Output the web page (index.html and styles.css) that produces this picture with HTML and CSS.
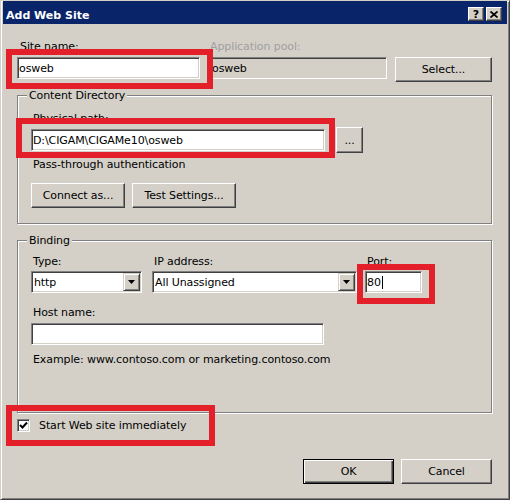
FILE: index.html
```html
<!doctype html>
<html lang="en">
    <head>
        <meta charset="UTF-8" />
        <meta name="viewport" content="width=device-width, initial-scale=1.0" />
        <title>Add Web Site</title>
        <link rel="stylesheet" href="styles.css">
    </head>
    <body>
        <div class="dialog">
            <div class="titlebar">
                <span class="title">Add Web Site</span>
                <span class="caption-btns">
                    <span class="cap-btn help">?</span>
                    <span class="cap-btn close">
                        <svg width="8" height="7" viewBox="0 0 8 7">
                            <path d="M0.5 0.5 L7.5 6.5 M7.5 0.5 L0.5 6.5" stroke="#000" stroke-width="1.7" fill="none" />
                        </svg>
                    </span>
                </span>
            </div>

            <div class="content">
                <div class="top-row">
                    <div class="field site-field">
                        <div class="label">Site name:</div>
                        <div class="textbox">osweb</div>
                    </div>
                    <div class="field pool-field">
                        <div class="label disabled">Application pool:</div>
                        <div class="textbox readonly">osweb</div>
                    </div>
                    <button class="btn select-btn">Select...</button>
                </div>

                <fieldset class="group content-dir">
                    <legend>Content Directory</legend>
                    <div class="label">Physical path:</div>
                    <div class="path-row">
                        <div class="textbox path-box">D:\CIGAM\CIGAMe10\osweb</div>
                        <button class="btn browse-btn">...</button>
                    </div>
                    <div class="label pass-label">Pass-through authentication</div>
                    <div class="btn-row">
                        <button class="btn connect-btn">Connect as...</button>
                        <button class="btn test-btn">Test Settings...</button>
                    </div>
                </fieldset>

                <fieldset class="group binding">
                    <legend>Binding</legend>
                    <div class="binding-row">
                        <div class="field type-field">
                            <div class="label">Type:</div>
                            <div class="combo">
                                <span class="combo-value">http</span>
                                <span class="combo-arrow">
                                    <svg width="7" height="4" viewBox="0 0 7 4"><polygon points="0,0 7,0 3.5,4" fill="#000" /></svg>
                                </span>
                            </div>
                        </div>
                        <div class="field ip-field">
                            <div class="label">IP address:</div>
                            <div class="combo">
                                <span class="combo-value">All Unassigned</span>
                                <span class="combo-arrow">
                                    <svg width="7" height="4" viewBox="0 0 7 4"><polygon points="0,0 7,0 3.5,4" fill="#000" /></svg>
                                </span>
                            </div>
                        </div>
                        <div class="field port-field">
                            <div class="label">Port:</div>
                            <div class="textbox">80<span class="caret"></span></div>
                        </div>
                    </div>
                    <div class="label host-label">Host name:</div>
                    <div class="textbox host-box"></div>
                    <div class="label example">Example: www.contoso.com or marketing.contoso.com</div>
                </fieldset>

                <div class="check-row">
                    <span class="checkbox">
                        <svg width="9" height="9" viewBox="0 0 9 9">
                            <polyline points="1,4 3.5,6.5 8,1.5" stroke="#000" stroke-width="2" fill="none" />
                        </svg>
                    </span>
                    <span class="check-label">Start Web site immediately</span>
                </div>

                <div class="dialog-buttons">
                    <button class="btn btn-default">OK</button>
                    <button class="btn">Cancel</button>
                </div>
            </div>

            <!-- red annotation boxes drawn over the dialog -->
            <div class="mark mark-site"></div>
            <div class="mark mark-path"></div>
            <div class="mark mark-port"></div>
            <div class="mark mark-start"></div>
        </div>
    </body>
</html>
```

FILE: styles.css
```css
:root {
    --face: #d4d0c8;
    --shadow: #808080;
    --dark: #404040;
    --light: #ffffff;
    --title: #0a246a;
    --mark: #e3202a;
}

* {
    margin: 0;
    padding: 0;
    box-sizing: border-box;
}

body {
    background: #ffffff;
    font-family: "DejaVu Sans", sans-serif;
    font-size: 11px;
    letter-spacing: -0.1px;
    color: #000000;
}

.dialog {
    position: relative;
    width: 510px;
    height: 500px;
    background: var(--face);
    border: 1px solid;
    border-color: var(--face) var(--dark) var(--dark) var(--face);
    box-shadow: inset 1px 1px 0 var(--light), inset -1px -1px 0 var(--shadow);
    padding: 0 2px 2px 2px;
}

.titlebar {
    height: 23px;
    background: var(--title);
    display: flex;
    align-items: flex-start;
    justify-content: space-between;
    padding: 0 5px 0 3px;
}

.title {
    color: #ffffff;
    font-weight: bold;
    line-height: 13px;
    padding-top: 8px;
    letter-spacing: 0;
}

.caption-btns {
    display: flex;
    gap: 2px;
    margin-top: 6px;
}

.cap-btn {
    width: 16px;
    height: 14px;
    display: flex;
    align-items: center;
    justify-content: center;
    background: var(--face);
    border: 1px solid;
    border-color: var(--light) var(--dark) var(--dark) var(--light);
    box-shadow: inset -1px -1px 0 var(--shadow);
    font-weight: bold;
    font-size: 11px;
    line-height: 1;
}

.content {
    padding: 16px 15px 0 14px;
}

.label {
    line-height: 13px;
    padding-left: 2px;
    margin-bottom: 4px;
    white-space: nowrap;
}

.top-row .label {
    padding-left: 3px;
}

.label.disabled {
    color: #a0a0a0;
    padding-left: 2px;
}

.textbox,
.combo {
    height: 22px;
    background: #ffffff;
    border: 1px solid;
    border-color: var(--shadow) var(--light) var(--light) var(--shadow);
    box-shadow: inset 1px 1px 0 var(--dark), inset -1px -1px 0 var(--face);
    display: flex;
    align-items: center;
    padding-left: 1px;
    white-space: nowrap;
    overflow: hidden;
}

.textbox.readonly {
    background: var(--face);
    padding-left: 3px;
}

.btn {
    height: 25px;
    background: var(--face);
    border: 1px solid;
    border-color: var(--light) var(--dark) var(--dark) var(--light);
    box-shadow: inset -1px -1px 0 var(--shadow), inset 1px 1px 0 var(--face);
    font: inherit;
    color: #000000;
    letter-spacing: inherit;
    padding: 0;
}

.btn-default {
    border-color: #000000;
    box-shadow: inset 1px 1px 0 var(--light), inset -1px -1px 0 var(--dark), inset -2px -2px 0 var(--shadow);
}

/* top row */
.top-row {
    display: flex;
    gap: 8px;
    align-items: flex-start;
}

.site-field {
    width: 183px;
}

.pool-field {
    width: 179px;
}

.select-btn {
    width: 97px;
    margin-top: 17px;
}

/* group boxes */
.group {
    border: 1px solid var(--shadow);
    box-shadow: inset 1px 1px 0 var(--light), 1px 1px 0 var(--light);
    padding: 10px 13px 15px 13px;
    min-width: 0;
}

.group legend {
    line-height: 13px;
    padding: 0 2px;
    margin-left: -4px;
    background: var(--face);
}

.content-dir {
    margin-top: 7px;
}

.content-dir .label:first-of-type {
    margin-bottom: 2px;
}

.path-row {
    display: flex;
    align-items: center;
    gap: 11px;
}

.path-box {
    width: 294px;
}

.browse-btn {
    width: 27px;
    height: 26px;
}

.pass-label {
    margin-top: 5px;
    margin-bottom: 0;
}

.btn-row {
    display: flex;
    gap: 7px;
    margin-top: 12px;
}

.connect-btn {
    width: 94px;
}

.test-btn {
    width: 104px;
}

/* binding */
.binding {
    margin-top: 10px;
    padding-top: 8px;
    padding-bottom: 46px;
}

.binding-row {
    display: flex;
    align-items: flex-start;
}

.binding-row .label {
    margin-bottom: 3px;
}

.type-field {
    width: 111px;
}

.ip-field {
    width: 205px;
    margin-left: 10px;
}

.port-field {
    width: 57px;
    margin-left: 8px;
}

.combo {
    padding: 1px;
    justify-content: space-between;
}

.combo-value {
    padding-left: 1px;
}

.combo-arrow {
    width: 17px;
    height: 18px;
    display: flex;
    align-items: center;
    justify-content: center;
    background: var(--face);
    border: 1px solid;
    border-color: var(--face) var(--dark) var(--dark) var(--face);
    box-shadow: inset 1px 1px 0 var(--light), inset -1px -1px 0 var(--shadow);
}

.caret {
    display: inline-block;
    width: 1px;
    height: 13px;
    background: #000000;
    margin-left: 1px;
}

.host-label {
    margin-top: 13px;
}

.host-box {
    width: 293px;
}

.example {
    margin-top: 8px;
    margin-bottom: 0;
}

/* checkbox + buttons */
.check-row {
    display: flex;
    align-items: center;
    gap: 9px;
    margin-top: 6px;
    line-height: 13px;
}

.checkbox {
    width: 13px;
    height: 13px;
    background: #ffffff;
    border: 1px solid;
    border-color: var(--shadow) var(--light) var(--light) var(--shadow);
    box-shadow: inset 1px 1px 0 var(--dark), inset -1px -1px 0 var(--face);
    display: flex;
    align-items: center;
    justify-content: center;
}

.dialog-buttons {
    display: flex;
    justify-content: flex-end;
    gap: 7px;
    margin-top: 27px;
}

.dialog-buttons .btn {
    width: 91px;
}

/* red annotation boxes */
.mark {
    position: absolute;
    border: 6px solid var(--mark);
}

.mark-site {
    left: 5px;
    top: 48px;
    width: 207px;
    height: 40px;
}

.mark-path {
    left: 15px;
    top: 117px;
    width: 319px;
    height: 40px;
}

.mark-port {
    left: 356px;
    top: 263px;
    width: 78px;
    height: 40px;
}

.mark-start {
    left: 5px;
    top: 404px;
    width: 209px;
    height: 41px;
}
```
